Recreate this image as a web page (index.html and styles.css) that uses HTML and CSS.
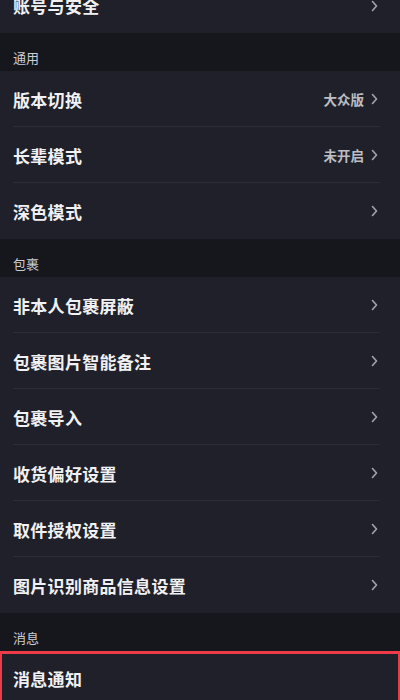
FILE: index.html
```html
<!DOCTYPE html>
<html lang="zh-CN">
<head>
  <meta charset="UTF-8">
  <title>设置</title>
  <link rel="stylesheet" href="styles.css">
</head>
<body>

<div class="lista">
  <div class="item item-topo">
    <span class="titulo">账号与安全</span>
    <span class="direita"><svg class="seta" viewBox="0 0 7 12"><polyline points="1.5,1.5 5.5,6 1.5,10.5"/></svg></span>
  </div>

  <div class="secao">通用</div>
  <div class="item">
    <span class="titulo">版本切换</span>
    <span class="direita"><span class="valor">大众版</span><svg class="seta" viewBox="0 0 7 12"><polyline points="1.5,1.5 5.5,6 1.5,10.5"/></svg></span>
  </div>
  <div class="item">
    <span class="titulo">长辈模式</span>
    <span class="direita"><span class="valor">未开启</span><svg class="seta" viewBox="0 0 7 12"><polyline points="1.5,1.5 5.5,6 1.5,10.5"/></svg></span>
  </div>
  <div class="item ultimo">
    <span class="titulo">深色模式</span>
    <span class="direita"><svg class="seta" viewBox="0 0 7 12"><polyline points="1.5,1.5 5.5,6 1.5,10.5"/></svg></span>
  </div>

  <div class="secao">包裹</div>
  <div class="item">
    <span class="titulo">非本人包裹屏蔽</span>
    <span class="direita"><svg class="seta" viewBox="0 0 7 12"><polyline points="1.5,1.5 5.5,6 1.5,10.5"/></svg></span>
  </div>
  <div class="item">
    <span class="titulo">包裹图片智能备注</span>
    <span class="direita"><svg class="seta" viewBox="0 0 7 12"><polyline points="1.5,1.5 5.5,6 1.5,10.5"/></svg></span>
  </div>
  <div class="item">
    <span class="titulo">包裹导入</span>
    <span class="direita"><svg class="seta" viewBox="0 0 7 12"><polyline points="1.5,1.5 5.5,6 1.5,10.5"/></svg></span>
  </div>
  <div class="item">
    <span class="titulo">收货偏好设置</span>
    <span class="direita"><svg class="seta" viewBox="0 0 7 12"><polyline points="1.5,1.5 5.5,6 1.5,10.5"/></svg></span>
  </div>
  <div class="item">
    <span class="titulo">取件授权设置</span>
    <span class="direita"><svg class="seta" viewBox="0 0 7 12"><polyline points="1.5,1.5 5.5,6 1.5,10.5"/></svg></span>
  </div>
  <div class="item ultimo">
    <span class="titulo">图片识别商品信息设置</span>
    <span class="direita"><svg class="seta" viewBox="0 0 7 12"><polyline points="1.5,1.5 5.5,6 1.5,10.5"/></svg></span>
  </div>

  <div class="secao">消息</div>
  <div class="item destaque">
    <span class="titulo">消息通知</span>
  </div>
</div>

</body>
</html>
```

FILE: styles.css
```css
html {
  font-family: "Noto Sans CJK SC", "Noto Sans", sans-serif;
}

body {
  margin: 0;
  width: 400px;
  height: 700px;
  overflow: hidden;
  background: #1f2029;
}

.lista {
  display: flex;
  flex-direction: column;
}

.item {
  height: 56px;
  background: #1f2029;
  display: flex;
  align-items: center;
  justify-content: space-between;
  padding: 0 22px 0 13px;
  position: relative;
  flex-shrink: 0;
}

.item::after {
  content: "";
  position: absolute;
  left: 13px;
  right: 20px;
  bottom: 0;
  height: 1px;
  background: #2b2d38;
}

.item.ultimo::after,
.item-topo::after {
  display: none;
}

/* primeira linha fica cortada pelo topo da tela */
.item-topo {
  margin-top: -22px;
  height: 55px;
}

.titulo {
  font-size: 17px;
  font-weight: 700;
  color: #f1f1f3;
  letter-spacing: 0.3px;
}

.direita {
  display: flex;
  align-items: center;
  gap: 7px;
}

.valor {
  font-size: 13.5px;
  font-weight: 700;
  color: #bdbdc2;
}

.seta {
  width: 7px;
  height: 12px;
  fill: none;
  stroke: #a4a5ab;
  stroke-width: 1.6;
  stroke-linecap: round;
  stroke-linejoin: round;
}

.secao {
  height: 38px;
  background: #16161d;
  display: flex;
  align-items: flex-end;
  padding: 0 13px 4px;
  box-sizing: border-box;
  font-size: 13px;
  color: #cdcdd2;
  flex-shrink: 0;
}

.destaque {
  border-top: 3px solid #ee3b48;
  border-left: 2px solid #ee3b48;
  border-right: 2px solid #ee3b48;
  padding-left: 11px;
  align-items: flex-start;
  padding-top: 12px;
  height: 60px;
}
```
